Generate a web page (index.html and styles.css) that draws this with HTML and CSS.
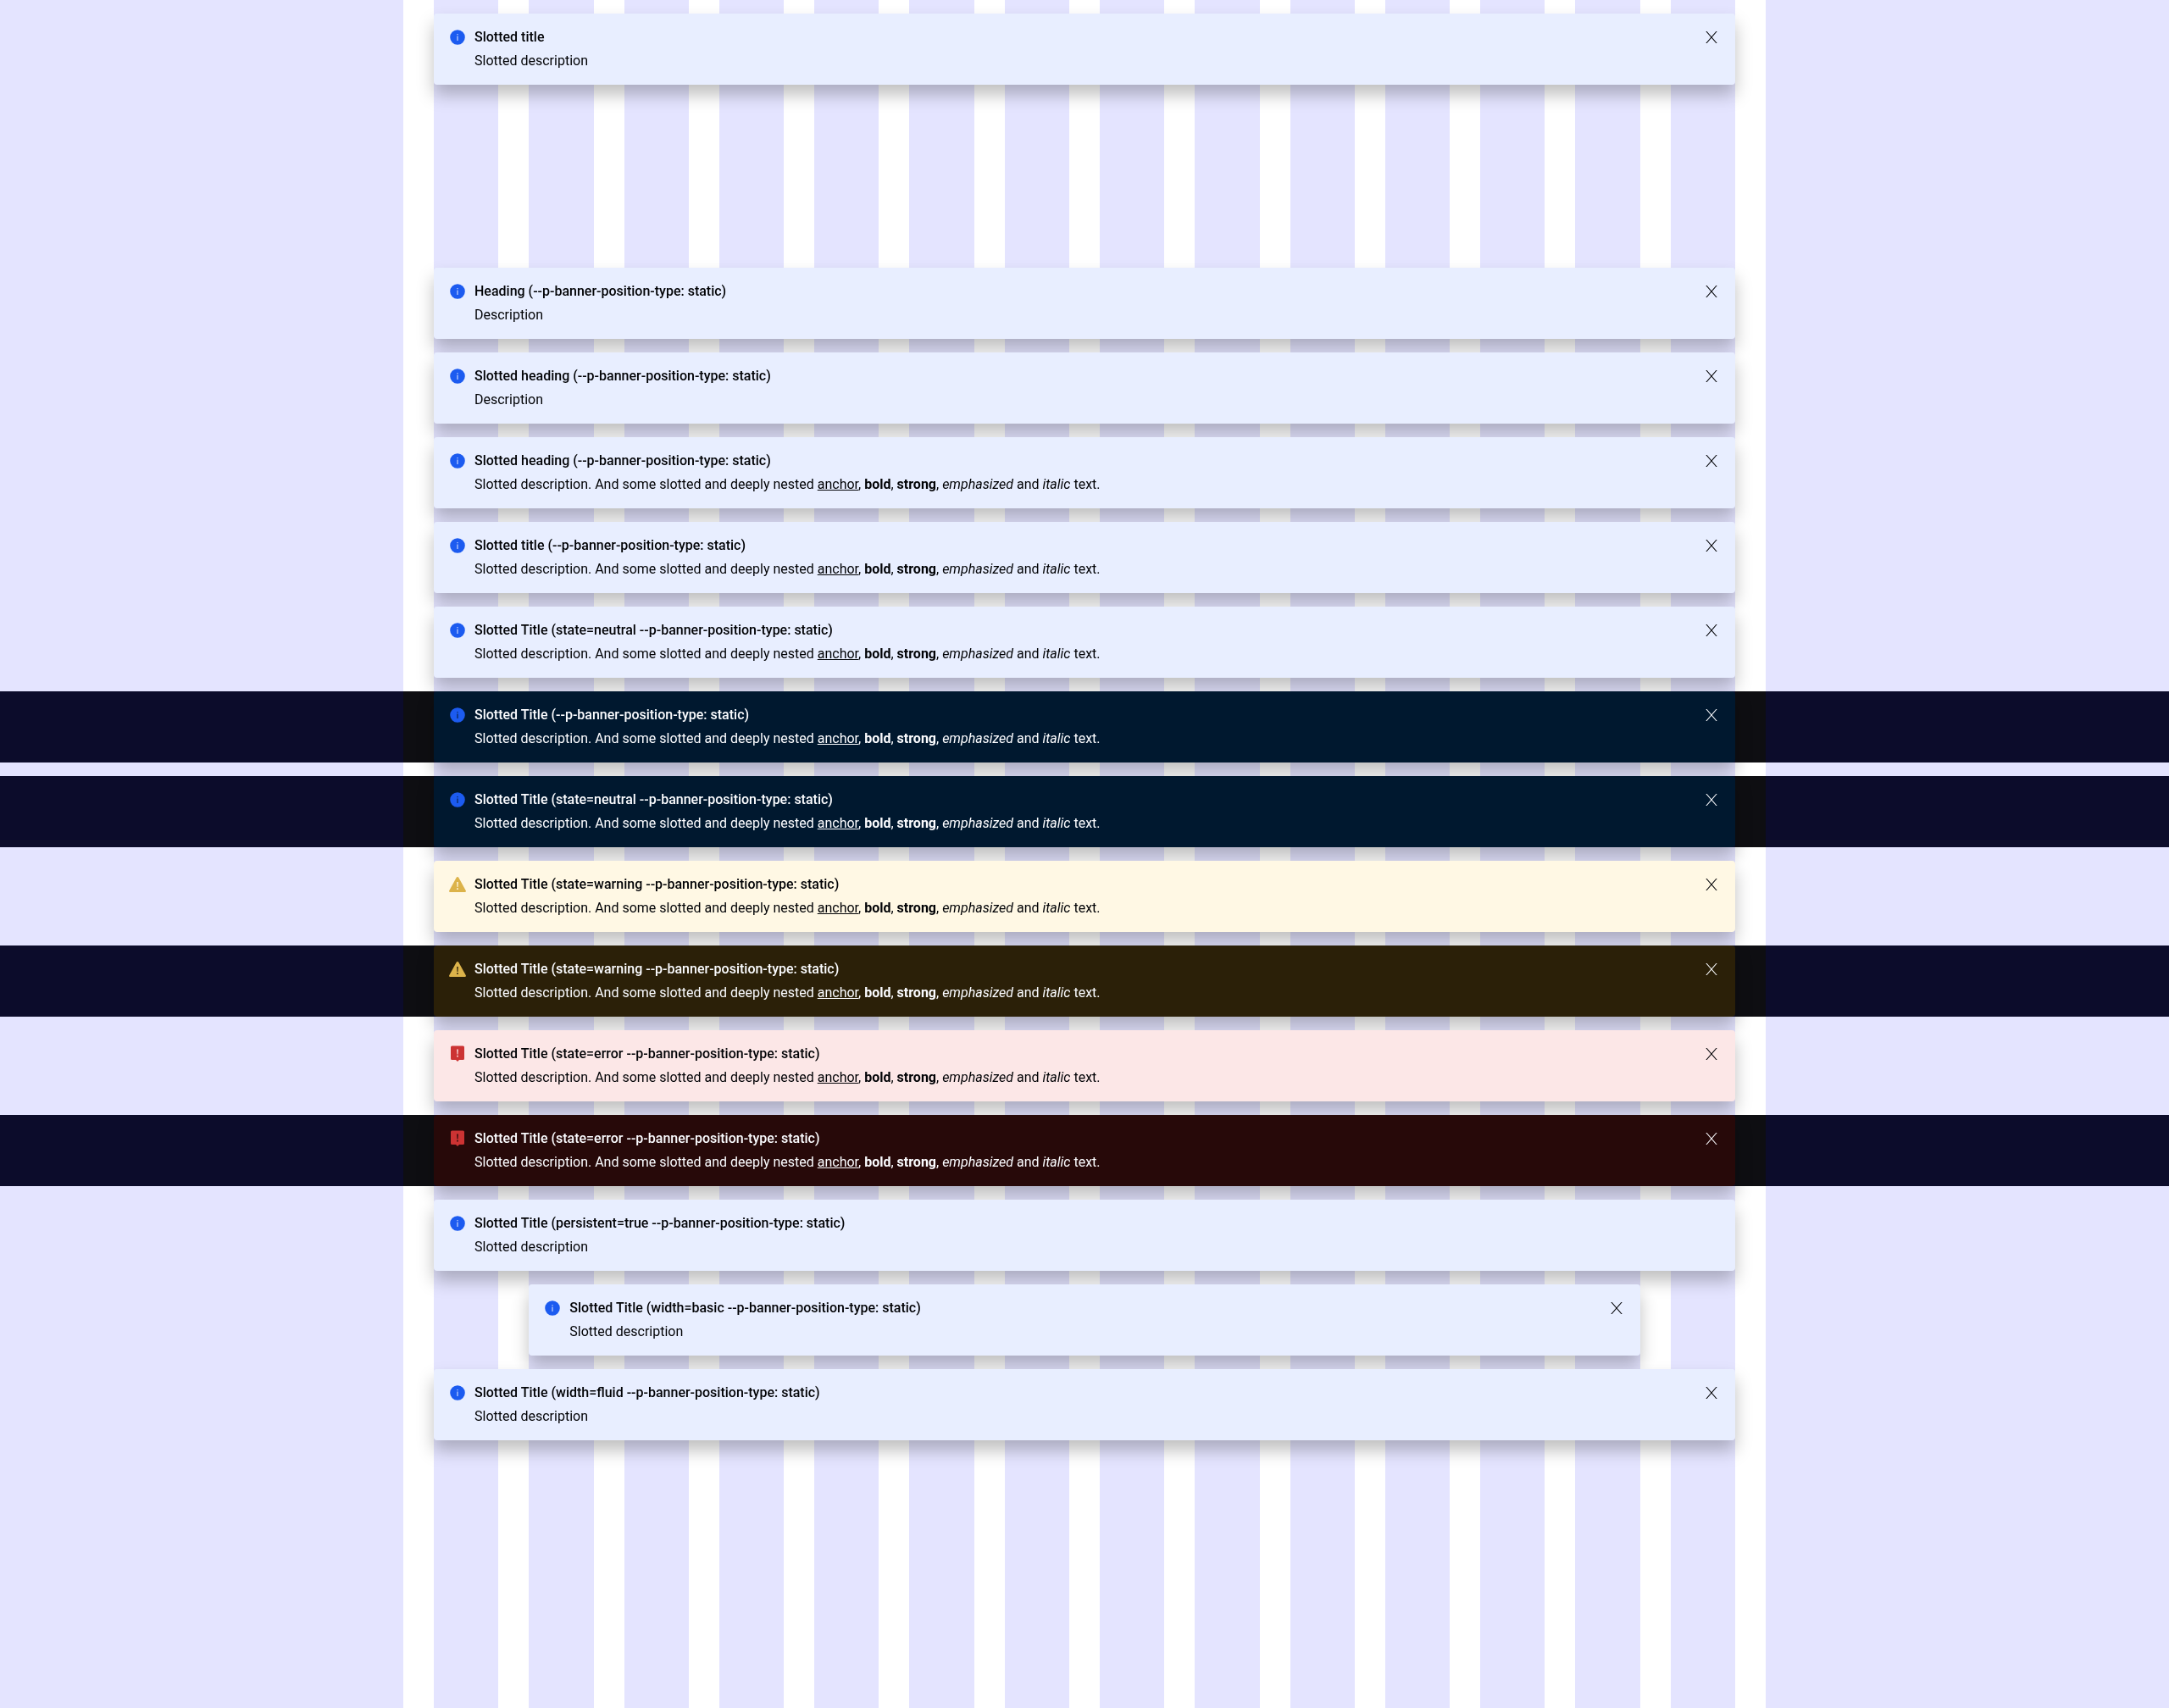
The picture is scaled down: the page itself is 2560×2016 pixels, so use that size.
FILE: index.html
```html
<!DOCTYPE html>
<html lang="en">
<head>
<meta charset="utf-8">
<meta name="viewport" content="width=device-width, initial-scale=1">
<title>Banner</title>
<link rel="stylesheet" href="styles.css">
</head>
<body>
<svg class="sprite" aria-hidden="true">
  <symbol id="info" viewBox="0 0 24 24">
    <path fill-rule="evenodd" d="M12 3.200a8.800 8.800 0 1 0 0 17.600a8.800 8.800 0 0 0 0-17.600zM11.500 8h1v1.300h-1zM11.500 10.500h1V16h-1z"/>
  </symbol>
  <symbol id="warning" viewBox="0 0 24 24">
    <path fill-rule="evenodd" d="M12 3c-.6 0-1 .3-1.300.8L2.200 19.300c-.4.800 0 1.700.9 1.700h17.800c.9 0 1.300-.9.900-1.700L13.300 3.800C13 3.300 12.600 3 12 3zM11.200 9h1.600l-.3 6h-1zM11.200 16.300h1.600V18h-1.600z"/>
  </symbol>
  <symbol id="error" viewBox="0 0 24 24">
    <path fill-rule="evenodd" d="M5.500 2.500h13A1.500 1.500 0 0 1 20 4v13.500a1.500 1.500 0 0 1-1.500 1.500H14l-2 2-2-2H5.500A1.500 1.500 0 0 1 4 17.500V4a1.500 1.500 0 0 1 1.500-1.500zM11.200 6.500h1.600l-.3 6h-1zM11.200 13.800h1.600v1.700h-1.600z"/>
  </symbol>
  <symbol id="close" viewBox="0 0 24 24">
    <path d="M5.300 5h1.300L12 11.200 17.400 5h1.300l-6 7 6 7h-1.300L12 12.800 6.600 19H5.300l6-7z"/>
  </symbol>
</svg>

<div class="columns" aria-hidden="true">
  <div class="column"></div>
  <div class="columns-inner">
    <div class="column"></div><div class="column"></div><div class="column"></div><div class="column"></div><div class="column"></div><div class="column"></div><div class="column"></div>
    <div class="column"></div><div class="column"></div><div class="column"></div><div class="column"></div><div class="column"></div><div class="column"></div><div class="column"></div>
  </div>
  <div class="column"></div>
</div>

<div class="row notice">
  <section class="banner">
    <svg class="icon"><use href="#info"/></svg>
    <div class="content"><h2>Slotted title</h2><p>Slotted description</p></div>
    <button class="close" type="button" aria-label="Close"><svg class="glyph"><use href="#close"/></svg></button>
  </section>
</div>

<main class="stack">
  <div class="row">
    <section class="banner">
      <svg class="icon"><use href="#info"/></svg>
      <div class="content"><h2>Heading (--p-banner-position-type: static)</h2><p>Description</p></div>
      <button class="close" type="button" aria-label="Close"><svg class="glyph"><use href="#close"/></svg></button>
    </section>
  </div>
  <div class="row">
    <section class="banner">
      <svg class="icon"><use href="#info"/></svg>
      <div class="content"><h2>Slotted heading (--p-banner-position-type: static)</h2><p>Description</p></div>
      <button class="close" type="button" aria-label="Close"><svg class="glyph"><use href="#close"/></svg></button>
    </section>
  </div>
  <div class="row">
    <section class="banner">
      <svg class="icon"><use href="#info"/></svg>
      <div class="content"><h2>Slotted heading (--p-banner-position-type: static)</h2><p>Slotted description. And some slotted and deeply nested <a href="#">anchor</a>, <b>bold</b>, <strong>strong</strong>, <em>emphasized</em> and <i>italic</i> text.</p></div>
      <button class="close" type="button" aria-label="Close"><svg class="glyph"><use href="#close"/></svg></button>
    </section>
  </div>
  <div class="row">
    <section class="banner">
      <svg class="icon"><use href="#info"/></svg>
      <div class="content"><h2>Slotted title (--p-banner-position-type: static)</h2><p>Slotted description. And some slotted and deeply nested <a href="#">anchor</a>, <b>bold</b>, <strong>strong</strong>, <em>emphasized</em> and <i>italic</i> text.</p></div>
      <button class="close" type="button" aria-label="Close"><svg class="glyph"><use href="#close"/></svg></button>
    </section>
  </div>
  <div class="row">
    <section class="banner">
      <svg class="icon"><use href="#info"/></svg>
      <div class="content"><h2>Slotted Title (state=neutral --p-banner-position-type: static)</h2><p>Slotted description. And some slotted and deeply nested <a href="#">anchor</a>, <b>bold</b>, <strong>strong</strong>, <em>emphasized</em> and <i>italic</i> text.</p></div>
      <button class="close" type="button" aria-label="Close"><svg class="glyph"><use href="#close"/></svg></button>
    </section>
  </div>
  <div class="row dark">
    <section class="banner">
      <svg class="icon"><use href="#info"/></svg>
      <div class="content"><h2>Slotted Title (--p-banner-position-type: static)</h2><p>Slotted description. And some slotted and deeply nested <a href="#">anchor</a>, <b>bold</b>, <strong>strong</strong>, <em>emphasized</em> and <i>italic</i> text.</p></div>
      <button class="close" type="button" aria-label="Close"><svg class="glyph"><use href="#close"/></svg></button>
    </section>
  </div>
  <div class="row dark">
    <section class="banner">
      <svg class="icon"><use href="#info"/></svg>
      <div class="content"><h2>Slotted Title (state=neutral --p-banner-position-type: static)</h2><p>Slotted description. And some slotted and deeply nested <a href="#">anchor</a>, <b>bold</b>, <strong>strong</strong>, <em>emphasized</em> and <i>italic</i> text.</p></div>
      <button class="close" type="button" aria-label="Close"><svg class="glyph"><use href="#close"/></svg></button>
    </section>
  </div>
  <div class="row">
    <section class="banner warning">
      <svg class="icon"><use href="#warning"/></svg>
      <div class="content"><h2>Slotted Title (state=warning --p-banner-position-type: static)</h2><p>Slotted description. And some slotted and deeply nested <a href="#">anchor</a>, <b>bold</b>, <strong>strong</strong>, <em>emphasized</em> and <i>italic</i> text.</p></div>
      <button class="close" type="button" aria-label="Close"><svg class="glyph"><use href="#close"/></svg></button>
    </section>
  </div>
  <div class="row dark">
    <section class="banner warning">
      <svg class="icon"><use href="#warning"/></svg>
      <div class="content"><h2>Slotted Title (state=warning --p-banner-position-type: static)</h2><p>Slotted description. And some slotted and deeply nested <a href="#">anchor</a>, <b>bold</b>, <strong>strong</strong>, <em>emphasized</em> and <i>italic</i> text.</p></div>
      <button class="close" type="button" aria-label="Close"><svg class="glyph"><use href="#close"/></svg></button>
    </section>
  </div>
  <div class="row">
    <section class="banner error">
      <svg class="icon"><use href="#error"/></svg>
      <div class="content"><h2>Slotted Title (state=error --p-banner-position-type: static)</h2><p>Slotted description. And some slotted and deeply nested <a href="#">anchor</a>, <b>bold</b>, <strong>strong</strong>, <em>emphasized</em> and <i>italic</i> text.</p></div>
      <button class="close" type="button" aria-label="Close"><svg class="glyph"><use href="#close"/></svg></button>
    </section>
  </div>
  <div class="row dark">
    <section class="banner error">
      <svg class="icon"><use href="#error"/></svg>
      <div class="content"><h2>Slotted Title (state=error --p-banner-position-type: static)</h2><p>Slotted description. And some slotted and deeply nested <a href="#">anchor</a>, <b>bold</b>, <strong>strong</strong>, <em>emphasized</em> and <i>italic</i> text.</p></div>
      <button class="close" type="button" aria-label="Close"><svg class="glyph"><use href="#close"/></svg></button>
    </section>
  </div>
  <div class="row">
    <section class="banner">
      <svg class="icon"><use href="#info"/></svg>
      <div class="content"><h2>Slotted Title (persistent=true --p-banner-position-type: static)</h2><p>Slotted description</p></div>
    </section>
  </div>
  <div class="row">
    <section class="banner basic">
      <svg class="icon"><use href="#info"/></svg>
      <div class="content"><h2>Slotted Title (width=basic --p-banner-position-type: static)</h2><p>Slotted description</p></div>
      <button class="close" type="button" aria-label="Close"><svg class="glyph"><use href="#close"/></svg></button>
    </section>
  </div>
  <div class="row">
    <section class="banner">
      <svg class="icon"><use href="#info"/></svg>
      <div class="content"><h2>Slotted Title (width=fluid --p-banner-position-type: static)</h2><p>Slotted description</p></div>
      <button class="close" type="button" aria-label="Close"><svg class="glyph"><use href="#close"/></svg></button>
    </section>
  </div>
</main>
</body>
</html>
```

FILE: styles.css
```css
:root {
  --gap: 36px;
  --content: min(1536px, 100vw - 2 * var(--gap));
}

*,
*::before,
*::after {
  box-sizing: border-box;
}

body {
  margin: 0;
  min-height: 100vh;
  background: #fff;
  font: 16px/24px Roboto, "Liberation Sans", sans-serif;
}

.sprite {
  display: none;
}

/* Translucent column overlay: above the row backgrounds, below the banners */
.columns {
  position: fixed;
  inset: 0;
  z-index: 0;
  display: grid;
  grid-template-columns: 1fr var(--content) 1fr;
  gap: var(--gap);
  pointer-events: none;
}

.columns-inner {
  display: grid;
  grid-template-columns: repeat(14, 1fr);
  gap: var(--gap);
}

.column {
  background: rgba(0, 0, 255, 0.105);
}

.row {
  display: grid;
  grid-template-columns: repeat(14, 1fr);
  column-gap: var(--gap);
  padding-inline: calc((100% - var(--content)) / 2);
}

.notice {
  padding-top: 16px;
}

.stack {
  display: grid;
  gap: 16px;
  margin-top: 216px;
  padding-bottom: 16px;
}

.banner {
  --surface: #e8eeff;
  --accent: #1c5bf0;
  --text: #010205;
  position: relative;
  z-index: 1;
  grid-column: 1 / -1;
  display: flex;
  align-items: flex-start;
  gap: 8px;
  padding: 16px;
  border-radius: 4px;
  background: var(--surface);
  color: var(--text);
  box-shadow: 0 12px 20px rgba(0, 0, 0, 0.25);
}

.banner.basic {
  grid-column: 2 / -2;
}

.banner.warning {
  --surface: #fff8e4;
  --accent: #dcb34a;
}

.banner.error {
  --surface: #fce7e7;
  --accent: #cc3333;
}

.dark {
  background: #0e0e12;
}

.dark .banner {
  --surface: #00182f;
  --text: #fbfcff;
}

.dark .warning {
  --surface: #2b2008;
}

.dark .error {
  --surface: #270909;
}

.icon,
.glyph {
  display: block;
  flex: none;
  width: 24px;
  height: 24px;
  fill: var(--accent);
}

.glyph {
  fill: currentColor;
}

.content {
  flex: 1;
  display: grid;
  gap: 4px;
}

h2,
p {
  margin: 0;
  font-size: 16px;
  line-height: 24px;
}

h2 {
  font-weight: 500;
}

p {
  font-weight: 400;
}

b,
strong {
  font-weight: 700;
}

a {
  color: inherit;
  text-decoration: underline;
}

.close {
  padding: 0;
  border: 0;
  background: none;
  color: inherit;
  cursor: pointer;
}
```
